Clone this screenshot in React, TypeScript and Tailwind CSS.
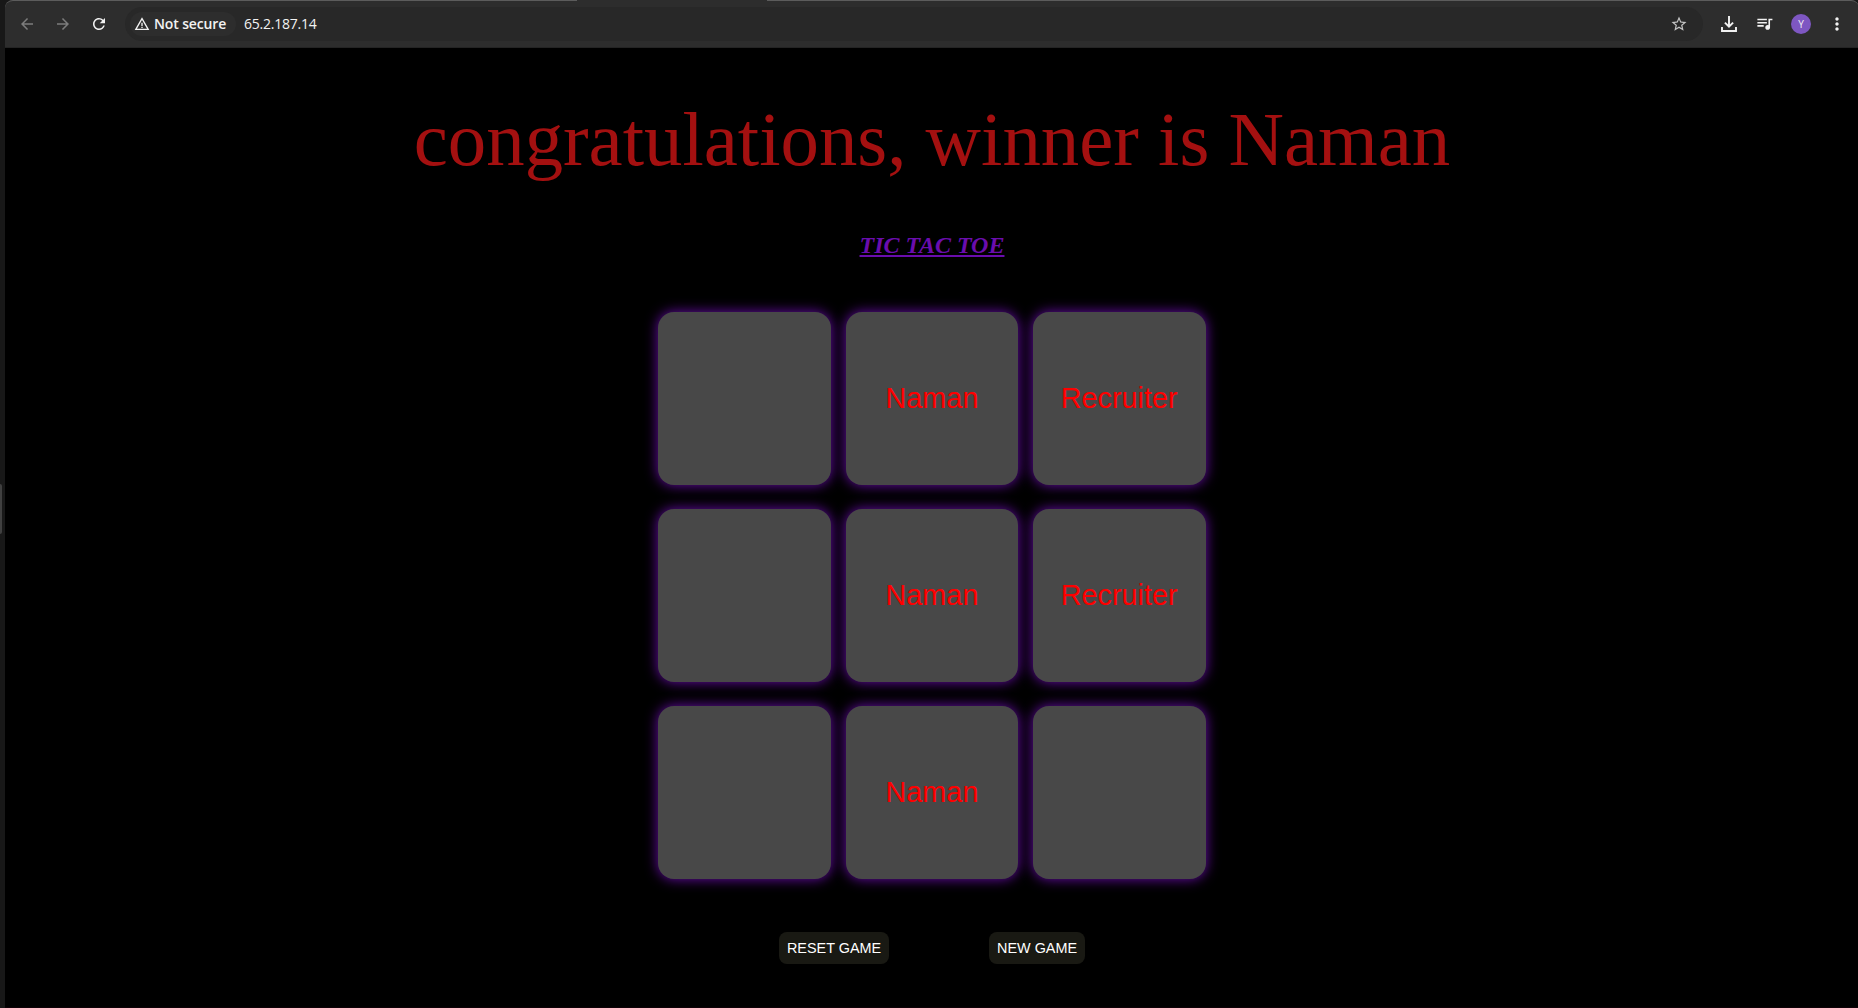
import React from "react";
import {
  MdArrowBack,
  MdArrowForward,
  MdRefresh,
  MdWarningAmber,
  MdStarBorder,
  MdQueueMusic,
  MdMoreVert,
} from "react-icons/md";

const cells = ["", "Naman", "Recruiter", "", "Naman", "Recruiter", "", "Naman", ""];

function DownloadIcon() {
  return (
    <svg width="16" height="16" viewBox="0 0 16 16" fill="none" stroke="#f2f2f2" strokeWidth="1.9">
      <path d="M8 0V10.4M3.9 6.6L8 10.7L12.1 6.6M1 11V15H15V11" />
    </svg>
  );
}

function Toolbar() {
  return (
    <header className="flex h-12 items-center rounded-t-lg border-t border-b border-t-[#5c5c5c] border-b-[#242424] bg-[#2d2d2d] pl-[13px] pr-3 font-['Open_Sans','Noto_Sans',sans-serif] text-sm text-[#f2f2f2]">
      <MdArrowBack size={18} className="shrink-0 text-[#7c7c7c]" />
      <MdArrowForward size={18} className="ml-[18px] shrink-0 text-[#7c7c7c]" />
      <MdRefresh size={18} className="ml-[18px] shrink-0" />
      <div className="ml-[17px] flex h-[34px] flex-1 items-center rounded-full bg-[#282828] pl-[5px] pr-[15px]">
        <div className="flex h-6 w-[106px] items-center rounded-full bg-[#2d2d2d] pl-1">
          <MdWarningAmber size={16} className="shrink-0" />
          <span className="ml-1 whitespace-nowrap font-semibold tracking-[-0.13px]">Not secure</span>
        </div>
        <span className="ml-2 whitespace-nowrap tracking-[-0.22px]">65.2.187.14</span>
        <MdStarBorder size={18} className="ml-auto text-[#c4c4c4]" />
      </div>
      <div className="ml-[18px] flex items-center">
        <DownloadIcon />
        <MdQueueMusic size={19} className="mb-px ml-[18px]" />
        <div className="ml-[17px] flex size-5 items-center justify-center rounded-full bg-[#7e57c2] text-[10px]">
          Y
        </div>
        <MdMoreVert size={20} className="ml-4" />
      </div>
    </header>
  );
}

export default function App() {
  return (
    <div className="flex h-[1008px] w-[1858px] overflow-hidden bg-[#181818]">
      <aside className="flex w-[5px] shrink-0 items-start pt-[484px]">
        <div className="h-[50px] w-[2px] rounded-r-sm bg-[#404040]" />
      </aside>
      <div className="relative flex flex-1 flex-col border-b border-[#0e0106] bg-black">
        <div className="bg-[#181818]">
          <Toolbar />
        </div>
        <div className="absolute left-[572px] top-0 h-px w-[190px] bg-[#2d2d2d]" />
        <main className="flex w-[1854px] flex-1 flex-col items-center">
          <h1 className="mt-[48px] whitespace-nowrap font-['Liberation_Serif',serif] text-[76.8px] leading-[88px] text-[#a41010]">
            congratulations, winner is Naman
          </h1>
          <h2 className="mt-[48px] font-['Liberation_Serif',serif] text-2xl leading-[27px] font-bold text-[#6a0dad] italic underline">
            TIC TAC TOE
          </h2>
          <section className="mt-[53.2px] grid grid-cols-[repeat(3,172.8px)] gap-x-[14.4px] gap-y-6">
            {cells.map((label, i) => (
              <button
                key={i}
                className="h-[172.8px] rounded-2xl bg-[#484848] font-['Liberation_Sans',sans-serif] text-[28.8px] text-[#ff0000] shadow-[0_0_12.8px_#6a0dad]"
              >
                {label}
              </button>
            ))}
          </section>
          <div className="mt-[53.6px] flex gap-[100px] font-['Liberation_Sans',sans-serif] text-[14.4px] text-white">
            <button className="h-8 rounded-lg bg-[#191913] px-2 pt-px">RESET GAME</button>
            <button className="h-8 rounded-lg bg-[#191913] px-2 pt-px">NEW GAME</button>
          </div>
        </main>
      </div>
    </div>
  );
}
